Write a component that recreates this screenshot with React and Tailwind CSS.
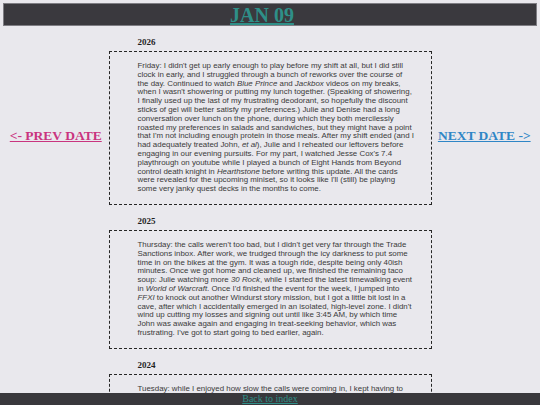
import React from "react";

const serif = "font-['Liberation_Serif',serif]";

// each entry is kept as the lines it was laid out in; *words* are italic
const entries = [
  {
    year: "2026",
    lines: [
      "Friday: I didn't get up early enough to play before my shift at all, but I did still",
      "clock in early, and I struggled through a bunch of reworks over the course of",
      "the day. Continued to watch *Blue Prince* and *Jackbox* videos on my breaks,",
      "when I wasn't showering or putting my lunch together. (Speaking of showering,",
      "I finally used up the last of my frustrating deodorant, so hopefully the discount",
      "sticks of gel will better satisfy my preferences.) Julie and Denise had a long",
      "conversation over lunch on the phone, during which they both mercilessly",
      "roasted my preferences in salads and sandwiches, but they might have a point",
      "that I'm not including enough protein in those meals. After my shift ended (and I",
      "had adequately treated John, *et al*), Julie and I reheated our leftovers before",
      "engaging in our evening pursuits. For my part, I watched Jesse Cox's 7.4",
      "playthrough on youtube while I played a bunch of Eight Hands from Beyond",
      "control death knight in *Hearthstone* before writing this update. All the cards",
      "were revealed for the upcoming miniset, so it looks like I'll (still) be playing",
      "some very janky quest decks in the months to come.",
    ],
  },
  {
    year: "2025",
    lines: [
      "Thursday: the calls weren't too bad, but I didn't get very far through the Trade",
      "Sanctions inbox. After work, we trudged through the icy darkness to put some",
      "time in on the bikes at the gym. It was a tough ride, despite being only 40ish",
      "minutes. Once we got home and cleaned up, we finished the remaining taco",
      "soup: Julie watching more *30 Rock*, while I started the latest timewalking event",
      "in *World of Warcraft*. Once I'd finished the event for the week, I jumped into",
      "*FFXI* to knock out another Windurst story mission, but I got a little bit lost in a",
      "cave, after which I accidentally emerged in an isolated, high-level zone. I didn't",
      "wind up cutting my losses and signing out until like 3:45 AM, by which time",
      "John was awake again and engaging in treat-seeking behavior, which was",
      "frustrating. I've got to start going to bed earlier, again.",
    ],
  },
  {
    year: "2024",
    lines: [
      "Tuesday: while I enjoyed how slow the calls were coming in, I kept having to",
      "stop and restart the same few reworks, so the afternoon dragged on longer",
      "than it should have. After work, Julie and I had leftovers and settled in",
      "for a quiet evening at home.",
    ],
  },
];

const renderLine = (line) =>
  line.split("*").map((part, i) => (i % 2 ? <i key={i}>{part}</i> : <React.Fragment key={i}>{part}</React.Fragment>));

const Entry = ({ year, lines }) => (
  <div className="flex flex-col pt-[7px]">
    <div className={`${serif} pl-[29px] text-[9px] font-bold leading-[18px] text-[#1f1f1f]`}>
      {year}
    </div>
    <div className="border border-dashed border-[#262626] pl-[28px] pr-[10px] py-[10px]">
      <p className="font-['Liberation_Sans',Arial,sans-serif] text-[7.9px] leading-[8.8px] text-[#3a3a3a]">
        {lines.map((l, i) => (
          <span key={i} className="block whitespace-nowrap">
            {renderLine(l)}
          </span>
        ))}
      </p>
    </div>
  </div>
);

export default function App() {
  return (
    <div className="h-screen overflow-hidden bg-[#e9e8ed] p-[3px]">
      <div className="flex h-[23px] items-center justify-center border border-[#7e7d83] bg-[#3a393e] pr-[16px]">
        <a href="#" className={`${serif} text-[20px] font-bold leading-none text-[#2e8f88] underline`}>
          JAN 09
        </a>
      </div>

      <div className="flex">
        <div className="flex flex-1 justify-center pt-[103px]">
          <a href="#" className={`${serif} h-fit text-[13.5px] font-bold leading-none text-[#c9347f] underline`}>
            &lt;- PREV DATE
          </a>
        </div>

        <div className="flex w-[323px] flex-col">
          {entries.map((e) => (
            <Entry key={e.year} year={e.year} lines={e.lines} />
          ))}
        </div>

        <div className="flex flex-1 justify-center pt-[103px]">
          <a href="#" className={`${serif} h-fit text-[13.5px] font-bold leading-none text-[#2f86c6] underline`}>
            NEXT DATE -&gt;
          </a>
        </div>
      </div>

      <div className="fixed bottom-0 left-0 right-0 flex h-[12px] items-center justify-center bg-[#39383c]">
        <a href="#" className={`${serif} text-[10px] leading-none text-[#2e8f88] underline`}>
          Back to index
        </a>
      </div>
    </div>
  );
}
